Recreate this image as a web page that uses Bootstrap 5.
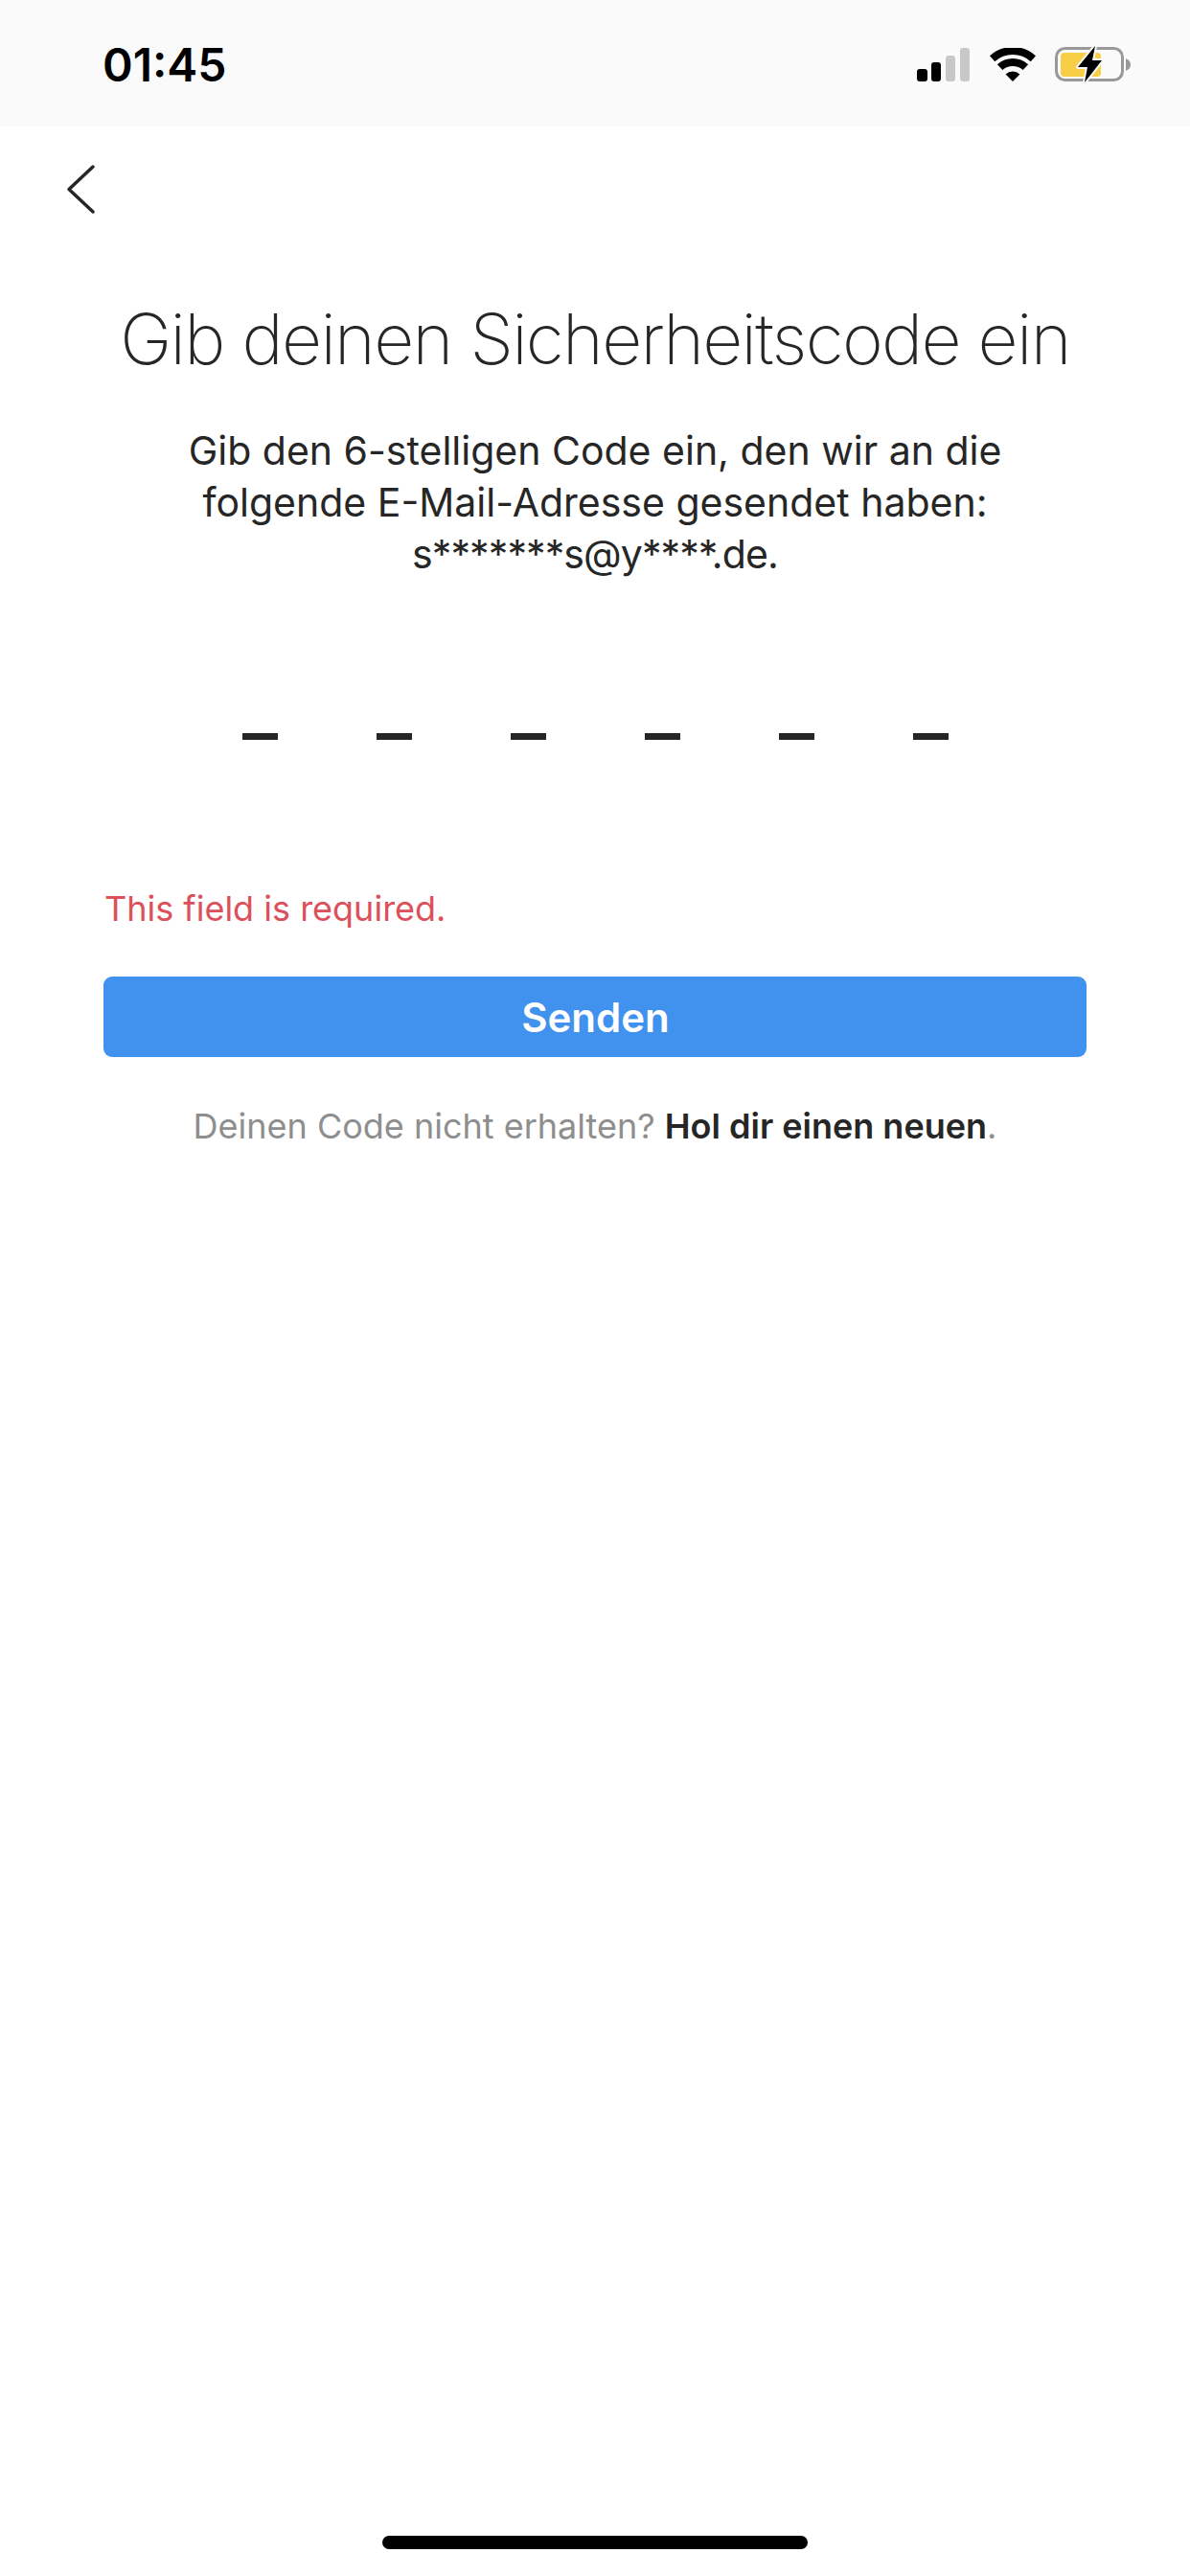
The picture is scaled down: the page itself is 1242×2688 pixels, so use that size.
<!DOCTYPE html>
<html lang="de">
<head>
  <meta charset="UTF-8" />
  <meta name="viewport" content="width=device-width, initial-scale=1" />
  <title>Sicherheitscode</title>
  <link href="https://cdn.jsdelivr.net/npm/bootstrap@5.3.3/dist/css/bootstrap.min.css" rel="stylesheet" />
  <style>
    body {
      background: #fff;
      font-family: Inter, "Liberation Sans", sans-serif;
      color: #262626;
    }
    .screen { height: 2688px; overflow: hidden; }
    .status-bar { height: 132px; background: #fafafa; padding: 0 61px 0 107px; }
    .status-time { font-size: 48px; font-weight: 600; color: #000; line-height: 1; padding-top: 3px; }
    .status-icons { gap: 20px; margin-top: 4px; }
    .back-row { padding: 38px 0 0 66px; height: 179px; }
    .back-row svg { display: block; }
    .code-title { font-size: 73px; font-weight: 200; line-height: 86px; letter-spacing: -1.7px; margin: 0 0 46px; color: #262626; }
    .code-info { font-size: 41px; line-height: 54px; margin: 0; }
    .masked-mail { letter-spacing: -0.9px; }
    .code-dashes { gap: 103px; margin-top: 160px; height: 7px; }
    .code-dash { width: 37px; height: 7px; background: #262626; }
    .code-error { font-size: 36px; line-height: 44px; color: #dc505b; margin: 154px 0 0 109px; }
    .send-btn {
      display: block; width: 1026px; height: 84px; margin: 49px 0 0 108px; padding: 0 0 0 1px;
      background: #4192ee; border: 0; border-radius: 9px;
      color: #fff; font-size: 42px; font-weight: 600;
    }
    .resend { font-size: 36px; line-height: 44px; color: #8e8e8e; margin: 50px 0 0; }
    .resend b { color: #262626; font-weight: 600; }
    .home-bar { width: 444px; height: 14px; border-radius: 7px; background: #000; margin: auto auto 28px; }
  </style>
</head>
<body>

<div class="screen d-flex flex-column">
  <!-- Status bar -->
  <div class="status-bar d-flex justify-content-between align-items-center">
    <span class="status-time">01:45</span>
    <div class="status-icons d-flex align-items-center">
      <svg width="56" height="36" viewBox="0 0 56 36">
        <rect x="0" y="22" width="11" height="13" rx="3" fill="#000"/>
        <rect x="15" y="15" width="10" height="20" rx="3" fill="#000"/>
        <rect x="30" y="8" width="10" height="27" rx="3" fill="#c8c8c8"/>
        <rect x="45" y="0" width="10" height="35" rx="3" fill="#c8c8c8"/>
      </svg>
      <svg width="48" height="36" viewBox="0 1 48 36">
        <path d="M2.6 12.2 A32 32 0 0 1 45.4 12.2" fill="none" stroke="#000" stroke-width="8"/>
        <path d="M10.6 21.1 A20 20 0 0 1 37.4 21.1" fill="none" stroke="#000" stroke-width="8"/>
        <path d="M24 36 L16.6 28.6 A10.5 10.5 0 0 1 31.4 28.6 Z" fill="#000"/>
      </svg>
      <svg width="80" height="40" viewBox="0 0 80 40">
        <rect x="1.5" y="2.5" width="69" height="33" rx="9" fill="none" stroke="#999" stroke-width="3"/>
        <rect x="6" y="7" width="42" height="25" rx="4" fill="#f8ce46"/>
        <path d="M74 13 Q79 15 79 19.5 Q79 24 74 26 Z" fill="#999"/>
        <path d="M42 0 L24 22 L34 22 L31 38 L49 15 L39 15 Z" fill="#000" stroke="#fafafa" stroke-width="4" paint-order="stroke" stroke-linejoin="round"/>
      </svg>
    </div>
  </div>

  <!-- Back arrow -->
  <div class="back-row">
    <svg width="36" height="56" viewBox="0 0 36 56">
      <path d="M31 4 L6 27.5 L31 51" fill="none" stroke="#262626" stroke-width="3.5" stroke-linecap="round" stroke-linejoin="round"/>
    </svg>
  </div>

  <!-- Form -->
  <h1 class="code-title text-center">Gib deinen Sicherheitscode ein</h1>
  <p class="code-info text-center">Gib den 6-stelligen Code ein, den wir an die<br />folgende E-Mail-Adresse gesendet haben:<br /><span class="masked-mail">s*******s@y****.de.</span></p>

  <div class="code-dashes d-flex justify-content-center">
    <span class="code-dash"></span>
    <span class="code-dash"></span>
    <span class="code-dash"></span>
    <span class="code-dash"></span>
    <span class="code-dash"></span>
    <span class="code-dash"></span>
  </div>

  <div class="code-error">This field is required.</div>
  <button class="btn send-btn" type="button">Senden</button>
  <p class="resend text-center">Deinen Code nicht erhalten? <b>Hol dir einen neuen</b>.</p>

  <div class="home-bar"></div>
</div>

</body>
</html>
